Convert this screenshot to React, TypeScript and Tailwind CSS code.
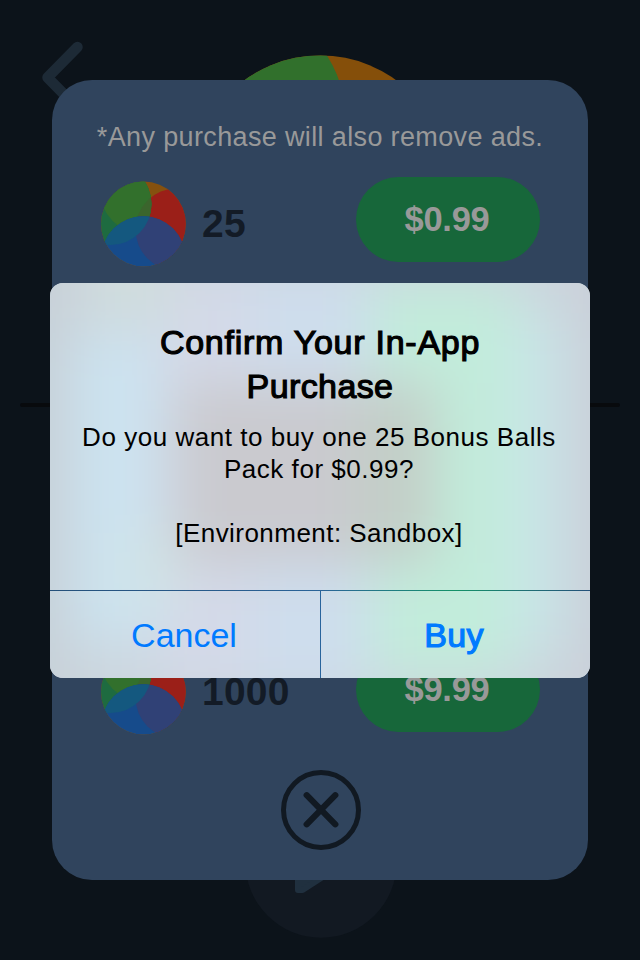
import React from "react";

/* Dimmed game screen that sits behind the purchase panel. */
function Backdrop() {
  return (
    <svg className="absolute inset-0" width="640" height="960" viewBox="0 0 640 960" fill="none">
      <defs>
        <clipPath id="bigBall">
          <circle cx="320.3" cy="184" r="128.6" />
        </clipPath>
      </defs>
      <path d="M77.5 47L47.5 77.5L77.5 108" stroke="#1d2a36" strokeWidth="10.5" strokeLinecap="round" strokeLinejoin="round" />
      <g clipPath="url(#bigBall)">
        <rect x="180" y="50" width="280" height="140" fill="#854f0a" />
        <circle cx="221" cy="122.6" r="125.4" fill="#31702c" />
      </g>
      <rect x="20" y="403" width="600" height="4" rx="2" fill="#080a0d" />
      <circle cx="321" cy="862" r="75.7" fill="#121922" />
      <path d="M298 830V890H302.5L349 860Z" fill="#20303f" stroke="#20303f" strokeWidth="6" strokeLinejoin="round" />
    </svg>
  );
}

function Ball({ id }: { id: string }) {
  const ball = `${id}-ball`;
  const leaf = `${id}-leaf`;
  const red = `${id}-red`;
  return (
    <svg className="shrink-0" width="86" height="86" viewBox="101 180.5 86 86">
      <defs>
        <clipPath id={ball}><circle cx="143.4" cy="223.5" r="42.4" /></clipPath>
        <clipPath id={leaf}><circle cx="110.5" cy="203.5" r="41" /></clipPath>
        <clipPath id={red}><circle cx="176.5" cy="229" r="41" /></clipPath>
      </defs>
      <g clipPath={`url(#${ball})`}>
        <rect x="100" y="180" width="88" height="88" fill="#85510f" />
        <circle cx="176.5" cy="229" r="41" fill="#9b1f18" />
        <circle cx="110.5" cy="203.5" r="41" fill="#1e6b40" />
        <circle cx="143" cy="190" r="43" fill="#32702c" clipPath={`url(#${leaf})`} />
        <circle cx="176.5" cy="229" r="41" fill="#3b652d" clipPath={`url(#${leaf})`} />
        <circle cx="143.3" cy="257.7" r="42" fill="#164b8b" />
        <circle cx="143.3" cy="257.7" r="42" fill="#304176" clipPath={`url(#${red})`} />
        <circle cx="143.3" cy="257.7" r="42" fill="#14587f" clipPath={`url(#${leaf})`} />
      </g>
    </svg>
  );
}

function Row({ id, count, price, inset }: { id: string; count: string; price: string; inset: string }) {
  return (
    <div className="flex h-[86px] items-start justify-between pl-[49px] pr-12">
      <div className={`flex items-center gap-[15px] ${inset}`}>
        <Ball id={id} />
        <span className="pb-0.5 text-[39px] font-bold leading-none tracking-[0.2px] text-[#131b26]">{count}</span>
      </div>
      <div className="flex h-[85px] w-[184px] items-center justify-center rounded-full bg-[#17673a] pr-0.5 pt-px text-[34.5px] font-bold tracking-[-0.3px] text-[#999999]">
        {price}
      </div>
    </div>
  );
}

function PurchasePanel() {
  return (
    <div className="relative h-[800px] w-[536px] rounded-[40px] bg-[#30445d] pt-10">
      <p className="text-center text-[27px] leading-[34px] tracking-[0.36px] text-[#999999]">
        *Any purchase will also remove ads.
      </p>
      <div className="mt-[23px] flex flex-col gap-[384px]">
        <Row id="small" count="25" price="$0.99" inset="pt-1" />
        <Row id="large" count="1000" price="$9.99" inset="pt-0.5" />
      </div>
      <div className="mt-[37px] flex justify-center pl-[2px]">
        <svg width="80" height="80" viewBox="0 0 80 80" fill="none" stroke="#111922" strokeLinecap="round">
          <circle cx="40" cy="40" r="37.5" strokeWidth="5" />
          <path d="M25.7 25.2L54.3 54.3M54.3 25.2L25.7 54.3" strokeWidth="6.2" />
        </svg>
      </div>
    </div>
  );
}

/* Frosted glass tint: soft colour patches picked up from the screen behind. */
function Frost() {
  return (
    <svg className="absolute inset-0" width="540" height="395" viewBox="0 0 540 395">
      <defs>
        <filter id="frost" x="-50%" y="-50%" width="200%" height="200%" colorInterpolationFilters="sRGB">
          <feGaussianBlur stdDeviation="27" />
        </filter>
      </defs>
      <rect width="540" height="395" fill="#cbd5de" />
      <g filter="url(#frost)">
        <rect x="-100" y="-100" width="760" height="600" fill="#ccd6de" />
        <rect x="-100" y="-100" width="120" height="600" fill="#c7d0d7" />
        <rect x="20" y="50" width="100" height="310" fill="#cce3f0" />
        <rect x="110" y="-10" width="90" height="420" fill="#d4d9e8" />
        <rect x="200" y="-10" width="120" height="420" fill="#cedded" />
        <rect x="320" y="0" width="145" height="395" fill="#c2ecdb" />
        <rect x="465" y="30" width="50" height="340" fill="#c9e5e9" />
        <rect x="515" y="-100" width="130" height="600" fill="#cad0d9" />
        <rect x="40" y="-60" width="85" height="95" fill="#d0dddd" />
        <rect x="70" y="250" width="60" height="70" fill="#d0e4e6" />
        <rect x="125" y="100" width="260" height="180" fill="#cacacf" />
        <rect x="305" y="105" width="80" height="170" fill="#c3cec7" />
      </g>
    </svg>
  );
}

function Alert() {
  return (
    <div className="absolute left-[50px] top-[283px] flex h-[395px] w-[540px] flex-col overflow-hidden rounded-[13px] text-black">
      <Frost />
      <div className="relative h-[307px] pt-[37px] text-center">
        <h1 className="text-[34px] font-normal leading-[44px] tracking-[0.74px] [-webkit-text-stroke:1.2px_black]">
          Confirm Your In-App
          <br />
          <span className="tracking-[0.4px]">Purchase</span>
        </h1>
        <p className="mt-[13px] pr-0.5 text-[26px] leading-8 tracking-[0.54px]">
          Do you want to buy one 25 Bonus Balls
          <br />
          Pack for $0.99?
          <br />
          <br />
          <span className="tracking-[0.45px]">[Environment: Sandbox]</span>
        </p>
      </div>
      <div className="relative h-px bg-linear-to-r from-[#24507a] via-[#2b6398] via-50% to-[#24507a]">
        <div className="absolute inset-y-0 left-[270px] right-0 bg-linear-to-r from-[#2b6398] via-[#149268] to-[#24507a]" />
      </div>
      <div className="relative flex h-[87px] text-[34px] text-[#007aff]">
        <button className="w-[270px] pr-0.5 pt-px">Cancel</button>
        <div className="w-px bg-[#28649c]" />
        <button className="w-[269px] pr-[3px] pt-px font-normal tracking-[0.3px] [-webkit-text-stroke:1.2px_#007aff]">Buy</button>
      </div>
    </div>
  );
}

export default function App() {
  return (
    <div className="relative flex h-[960px] w-[640px] items-center justify-center overflow-hidden bg-[#0c131a] font-['Liberation_Sans',Arial,sans-serif]">
      <Backdrop />
      <PurchasePanel />
      <Alert />
    </div>
  );
}
